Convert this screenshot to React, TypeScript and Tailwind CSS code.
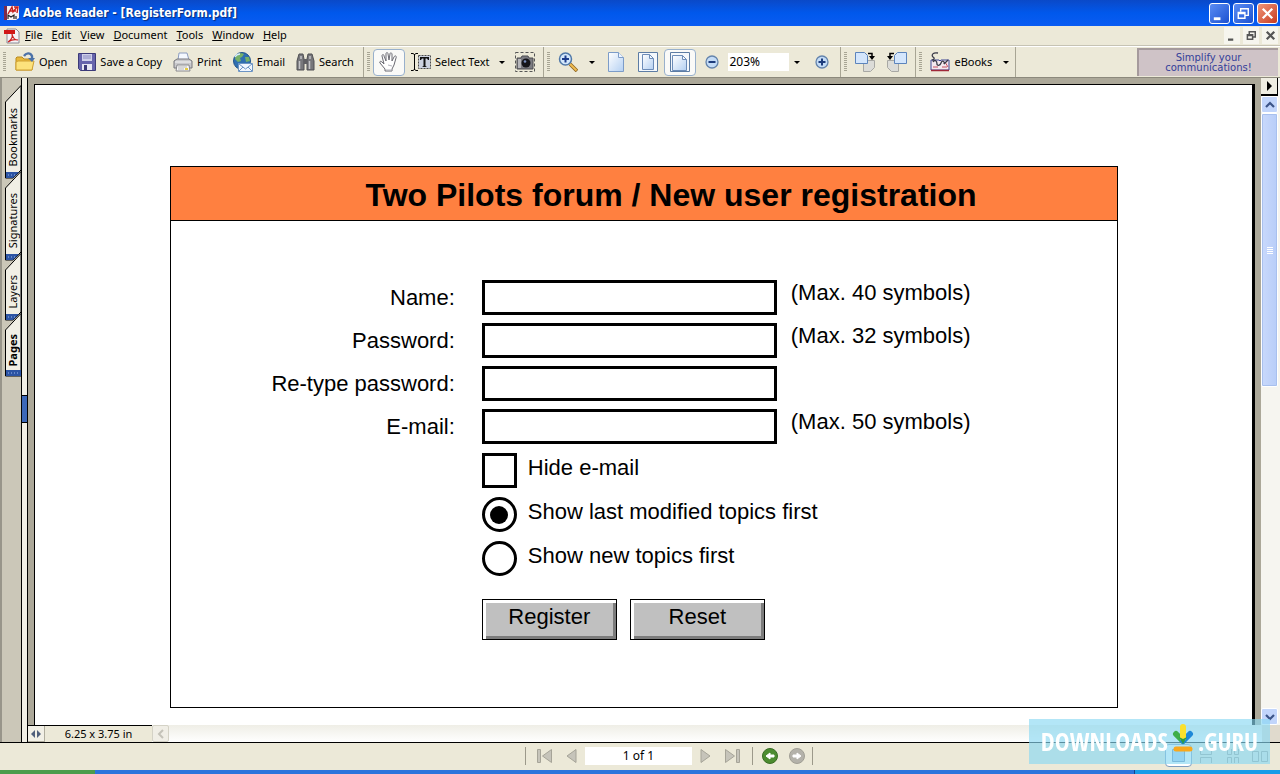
import type { ReactNode } from 'react'
import clsx from 'clsx'

const menuItems = ['File', 'Edit', 'View', 'Document', 'Tools', 'Window', 'Help']

const sideTabs = [
  { name: 'Bookmarks', height: 94 },
  { name: 'Signatures', height: 90 },
  { name: 'Layers', height: 68 },
  { name: 'Pages', height: 64, active: true },
]

const fields = [
  { id: 'name', label: 'Name:', type: 'text', hint: '(Max. 40 symbols)' },
  { id: 'password', label: 'Password:', type: 'password', hint: '(Max. 32 symbols)' },
  { id: 'retype', label: 'Re-type password:', type: 'password', hint: '' },
  { id: 'email', label: 'E-mail:', type: 'email', hint: '(Max. 50 symbols)' },
]

/* ---------- icons ---------- */

const ReaderIcon = () => (
  <svg width="16" height="16" viewBox="0 0 16 16">
    <path d="M0 1h3v14H0z" fill="#7c2a4a" />
    <path d="M3 1h12v12l-3 2H3z" fill="#f6f2f2" />
    <path d="M4 9 8 2l1 5 4-5M6 6h6M10 2h4l-1 6" fill="none" stroke="#c8201c" strokeWidth="1.4" />
    <path d="M4 14v-4l3 2 3-2v4M12 11v3" fill="none" stroke="#222" strokeWidth="1.2" />
  </svg>
)

const PdfIcon = () => (
  <svg width="16" height="16" viewBox="0 0 16 16">
    <path d="M3 1h9l3 3v11H3z" fill="#f4f4f7" stroke="#8a8a96" />
    <path d="M0 2h11v4H0z" fill="#d01818" />
    <path d="M4 14c3-2 5-5 4-8 1 5 3 6 6 6-4-1-7 0-10 2z" fill="none" stroke="#c22" strokeWidth="1.2" />
  </svg>
)

const OpenIcon = () => (
  <svg width="20" height="20" viewBox="0 0 20 20">
    <path d="M1 18V6l1-1h5l2 2h8v11z" fill="#e8b83a" stroke="#b98a1e" />
    <path d="M1 18V10l2-1h16l-2 9z" fill="#fce27c" stroke="#cfa032" />
    <path d="M9 4c2-3 6-4 8 0v3" fill="none" stroke="#4c72a8" strokeWidth="2.4" />
    <path d="m13 6 4 4 3-4z" fill="#4c72a8" />
  </svg>
)

const SaveIcon = () => (
  <svg width="18" height="18" viewBox="0 0 18 18">
    <path d="M0.5 0.5h17v17h-15l-2-2z" fill="#6664ac" stroke="#3c3a78" />
    <path d="M4 1h10v7H4z" fill="#cfd0ea" />
    <path d="M5 3h8M5 5h8" stroke="#8a8ac0" />
    <path d="M4 11h10v6H4z" fill="#e6e6f2" />
    <path d="M6 12h3v5H6z" fill="#3c3a78" />
  </svg>
)

const PrintIcon = () => (
  <svg width="20" height="20" viewBox="0 0 20 20">
    <path d="M5 8 6 1h8l2 7z" fill="#f4f8ff" stroke="#8c9cc0" />
    <path d="M1 9l3-2h12l3 2v7H1z" fill="#c9c9cc" stroke="#77777c" />
    <path d="M2 10h16" stroke="#f5f5f5" />
    <path d="M4 13h12l1 6H3z" fill="#f8f8f8" stroke="#88888c" />
    <path d="M5 15h9M5 17h6" stroke="#b5b5b5" />
    <path d="M12 16h3v2h-3z" fill="#e5cc44" />
  </svg>
)

const EmailIcon = () => (
  <svg width="20" height="20" viewBox="0 0 20 20">
    <circle cx="9" cy="9" r="8.5" fill="#2f6fb0" stroke="#22548c" />
    <path d="M3 3c3-2 6-2 8-1l-2 3-2 1 1 3-3 1-3-3zM12 5l4 0 1 4-4 1z" fill="#76b068" />
    <path d="M2 5c1-2 3-3 5-3" stroke="#d7ecfa" strokeWidth="1.3" fill="none" />
    <path d="M5.5 11.5h14v8h-14z" fill="#f0f6ff" stroke="#6c94c4" />
    <path d="m6 12 6.5 5 6.5-5M6 19l4-4M19 19l-4-4" fill="none" stroke="#6c94c4" />
  </svg>
)

const SearchIcon = () => (
  <svg width="19" height="18" viewBox="0 0 19 18">
    <path d="M3 1h4l1 5v11H1V8zM12 1h4l2 7v9h-7V6z" fill="#77777b" stroke="#505054" />
    <path d="M8 6h3v5H8z" fill="#606064" />
    <path d="M3.5 8v8M5 3v3M13.5 8v8M14 3v3" stroke="#c4c4c8" strokeWidth="1.5" />
  </svg>
)

const HandIcon = () => (
  <svg width="20" height="20" viewBox="0 0 20 20">
    <path
      d="M6 19v-2L1 11c-1-2 1-2 2-1l2 2L3 4c0-2 2-2 2 0l2 5V2c0-2 2-2 2 0l1 6 1-6c0-2 2-1 2 0v7l2-4c1-2 3-1 2 1l-2 7-2 4v2z"
      fill="#fff"
      stroke="#6a6a72"
    />
    <path d="M7 18h6M9 13l4 1" stroke="#b4b4bc" />
  </svg>
)

const SelectTextIcon = () => (
  <svg width="20" height="20" viewBox="0 0 20 20">
    <path d="M7.5 3.5h12v13h-12z" fill="#ccd2e0" stroke="#4c4c4c" strokeDasharray="2 1" />
    <path d="M0 1.5h2l1.5 1L5 1.5h2M3.5 2v16M0 18.5h2l1.5-1 1.5 1h2" fill="none" stroke="#000" />
    <path d="M9 5h9v3h-1l-1-1.5h-1.5V14l1.5 1h-5l1.5-1V6.5H11L10 8H9z" fill="#111" />
  </svg>
)

const CameraIcon = () => (
  <svg width="20" height="20" viewBox="0 0 20 20">
    <path d="M0.5 0.5h19v19h-19z" fill="none" stroke="#555" strokeDasharray="3 2" />
    <path d="M2 6h4l1-2h6l1 2h4v11H2z" fill="#7c7c82" stroke="#4c4c50" />
    <path d="M3 7h3v9H3z" fill="#b6b6ba" />
    <circle cx="11" cy="11" r="4.5" fill="#15151a" />
    <circle cx="10" cy="9.5" r="1.3" fill="#7a90c0" />
  </svg>
)

const ZoomIcon = () => (
  <svg width="20" height="20" viewBox="0 0 20 20">
    <path d="m12 12 7 7" stroke="#8c6420" strokeWidth="3.6" />
    <path d="m12 12 6.5 6.5" stroke="#f0bc50" strokeWidth="2" />
    <circle cx="7.5" cy="7" r="6" fill="#d4e8fb" stroke="#5078a8" strokeWidth="1.5" />
    <path d="M4 7h7M7.5 3.5v7" stroke="#1d3c8c" strokeWidth="2" />
  </svg>
)

const PageIcon = ({ frame }: { frame?: 'wide' | 'full' }) => (
  <svg width="20" height="20" viewBox="0 0 20 20">
    <defs>
      <linearGradient id="paper" x1="0" y1="0" x2="1" y2="1">
        <stop offset="0" stopColor="#fff" />
        <stop offset="1" stopColor="#b4d0f2" />
      </linearGradient>
    </defs>
    {frame && <path d="M0.5 0.5h19v19h-19z" fill="#f4f8fc" stroke="#5c7ca4" />}
    {!frame && <path d="M2.5 0.5h10l5 5v14h-15z" fill="url(#paper)" stroke="#7c9cc8" />}
    {!frame && <path d="M12.5 0.5v5h5" fill="#eef5ff" stroke="#7c9cc8" />}
    {frame === 'wide' && <path d="M4.5 2.5h7l4 4v11h-11zM11.5 2.5v4h4" fill="url(#paper)" stroke="#6c8cb8" />}
    {frame === 'full' && <path d="M2.5 3.5h10l4 4v11h-14zM12.5 3.5v4h4" fill="url(#paper)" stroke="#6c8cb8" />}
  </svg>
)

const RoundIcon = ({ plus }: { plus?: boolean }) => (
  <svg width="14" height="14" viewBox="0 0 14 14">
    <circle cx="7" cy="7" r="6" fill="#c4dcf6" stroke="#6484ac" strokeWidth="1.3" />
    <path d={plus ? 'M3.5 7h7M7 3.5v7' : 'M3.5 7h7'} stroke="#1d3c7c" strokeWidth="2" />
  </svg>
)

const RotateIcon = ({ left }: { left?: boolean }) => (
  <svg width="20" height="20" viewBox="0 0 20 20" className={left ? '-scale-x-100' : ''}>
    <path d="M8.5 8.5h11v7l-4 4h-7z" fill="#dcdcd8" stroke="#a8a8a4" />
    <path d="M0.5 0.5h9l3 3v8h-12z" fill="#d4e6fc" stroke="#5c84bc" />
    <path d="M13 1.5h4V5" fill="none" stroke="#000" strokeWidth="1.5" />
    <path d="M14 4h6l-3 4z" fill="#000" />
  </svg>
)

const BooksIcon = () => (
  <svg width="20" height="20" viewBox="0 0 20 20">
    <path d="M1 8h8l1 1 1-1h8v10H1z" fill="#f4e8ee" stroke="#3c4494" />
    <path d="M1 18.5h18" stroke="#a02838" strokeWidth="1.5" />
    <path d="M3 15h5M12 15h5M15 10l3 5" stroke="#c85060" />
    <path
      d="M8 1c-5-1-7 2-5 4 2 1 1 3-1 3M3 10c2-3 4-1 4 2 0 2 3 2 4-1s4-2 3 1l4-4"
      fill="none"
      stroke="#3a3a48"
      strokeWidth="1.3"
    />
  </svg>
)

const Caret = () => (
  <svg width="6" height="3" viewBox="0 0 6 3">
    <path d="M0 0h6L3 3z" fill="#000" />
  </svg>
)

const Chevron = ({ d }: { d: string }) => (
  <svg width="10" height="10" viewBox="0 0 10 10">
    <path d={d} fill="none" stroke="#3c5488" strokeWidth="2.2" />
  </svg>
)

const LayoutIcon = ({ d }: { d: string }) => (
  <svg width="16" height="16" viewBox="0 0 16 16">
    <path d={d} fill="#e4e4da" stroke="#a0a096" />
  </svg>
)

const DownloadIcon = () => (
  <svg width="22" height="28" viewBox="0 0 22 28">
    <path d="m4 10 7 7" stroke="#3fae49" strokeWidth="6" strokeLinecap="round" />
    <path d="m18 10-7 7" stroke="#1e88d8" strokeWidth="6" strokeLinecap="round" />
    <path d="M11 3v11" stroke="#fbe02c" strokeWidth="6" strokeLinecap="round" />
    <path d="m7 13 4 7 4-7-4 2z" fill="#2c9c48" />
    <path d="M4 25h14" stroke="#f8a81c" strokeWidth="5" strokeLinecap="round" />
  </svg>
)

/* ---------- window chrome ---------- */

const windowPaths = ['M4 14h7v3H4z', 'M7 8V5h8v7h-3M4.5 9h7v6h-7zM4.5 10h7', 'M5 5l10 10M15 5 5 15']
const windowNames = ['Minimize', 'Restore', 'Close']

const TitleBar = () => (
  <header className="flex h-[26px] shrink-0 items-center gap-[3px] bg-linear-to-b from-[#0a49c8] via-[#0058ec] to-[#0a5cf2] pr-[2px] pl-1">
    <ReaderIcon />
    <h1 className="flex-1 font-['DejaVu_Sans_Condensed','Noto_Sans',sans-serif] text-[12px] font-bold whitespace-nowrap text-white [text-shadow:1px_1px_1px_#0a2a78]">
      Adobe Reader - [RegisterForm.pdf]
    </h1>
    {windowPaths.map((d, i) => (
      <button
        key={d}
        aria-label={windowNames[i]}
        className={clsx(
          'flex size-[21px] items-center justify-center rounded-[3px] border border-white',
          i === 2 ? 'bg-linear-to-br from-[#ee9478] to-[#c8381c]' : 'bg-linear-to-br from-[#5a8cf4] to-[#1c50d0]'
        )}
      >
        <svg width="19" height="19" viewBox="0 0 20 20">
          <path d={d} fill={i === 0 ? '#fff' : 'none'} stroke="#fff" strokeWidth={i === 0 ? 0 : i === 2 ? 2.4 : 1.5} />
        </svg>
      </button>
    ))}
  </header>
)

const MenuBar = () => (
  <nav className="flex h-5 shrink-0 items-center gap-[9px] border-b border-[#c6c3b4] pr-[2px] pl-1">
    <div className="-mr-[4px]">
      <PdfIcon />
    </div>
    {menuItems.map((item) => (
      <button key={item}>
        <span className="underline">{item[0]}</span>
        {item.slice(1)}
      </button>
    ))}
    <div className="ml-auto flex gap-[3px]">
      {windowPaths.map((d, i) => (
        <button
          key={d}
          aria-label={`${windowNames[i]} document`}
          className="flex h-[17px] w-4 items-center justify-center bg-[#f6f5ee]"
        >
          <svg width="15" height="15" viewBox="0 0 20 20">
            <path d={d} fill={i === 0 ? '#555' : 'none'} stroke="#555" strokeWidth={i === 0 ? 0 : i === 2 ? 3 : 2} />
          </svg>
        </button>
      ))}
    </div>
  </nav>
)

const ToolGroup = ({ children, className }: { children: ReactNode; className?: string }) => (
  <div className={clsx('flex items-center border-r border-[#a8a594] pl-[3px]', className)}>
    <div className="mr-2 h-5 w-[3px] bg-[repeating-linear-gradient(to_bottom,#a8a594_0_1px,transparent_1px_2px)]" />
    {children}
  </div>
)

const Tool = ({ icon, label }: { icon: ReactNode; label: string }) => (
  <button className="flex items-center gap-1 whitespace-nowrap">
    {icon}
    {label}
  </button>
)

const pressed = 'flex h-[27px] w-8 items-center justify-center rounded-[4px] border border-[#98b0cc] bg-[#fafaf8]'

const Toolbar = () => (
  <div className="flex h-8 shrink-0 border-t border-b border-t-white border-b-[#8c897c]">
    <ToolGroup className="gap-[11px] pr-[9px] *:first:-mr-[2px]">
      <Tool icon={<OpenIcon />} label="Open" />
      <Tool icon={<SaveIcon />} label="Save a Copy" />
      <Tool icon={<PrintIcon />} label="Print" />
      <Tool icon={<EmailIcon />} label="Email" />
      <Tool icon={<SearchIcon />} label="Search" />
    </ToolGroup>
    <ToolGroup className="pr-2 *:first:mr-[3px]">
      <button aria-label="Hand tool" className={pressed}><HandIcon /></button>
      <div className="ml-[6px]"><Tool icon={<SelectTextIcon />} label="Select Text" /></div>
      <button aria-label="Select options" className="px-[10px]"><Caret /></button>
      <button aria-label="Snapshot"><CameraIcon /></button>
    </ToolGroup>
    <ToolGroup className="pr-[11px]">
      <button aria-label="Zoom in tool"><ZoomIcon /></button>
      <button aria-label="Zoom options" className="px-[11px]"><Caret /></button>
      <button aria-label="Actual size"><PageIcon /></button>
      <button aria-label="Fit page" className="mr-[6px] ml-3"><PageIcon frame="wide" /></button>
      <button aria-label="Fit width" className={pressed}><PageIcon frame="full" /></button>
      <button aria-label="Zoom out" className="mx-[9px]"><RoundIcon /></button>
      <input aria-label="Zoom level" defaultValue="203%" className="h-[18px] w-[61px] bg-white px-[1px] text-[12px]" />
      <button aria-label="Zoom levels" className="px-[5px]"><Caret /></button>
      <button aria-label="Zoom in" className="ml-[10px]"><RoundIcon plus /></button>
    </ToolGroup>
    <ToolGroup className="pr-2">
      <button aria-label="Rotate clockwise" className="mr-3"><RotateIcon /></button>
      <button aria-label="Rotate counterclockwise"><RotateIcon left /></button>
    </ToolGroup>
    <ToolGroup>
      <Tool icon={<BooksIcon />} label="eBooks" />
      <button aria-label="eBooks options" className="pr-[6px] pl-[11px]"><Caret /></button>
    </ToolGroup>
    <a
      href="#communications"
      className="mt-px mr-[2px] ml-auto flex h-7 w-[141px] items-center justify-center border-t-2 border-l-2 border-[#a59a9c] bg-[#cfc3c7] text-center font-['DejaVu_Sans',sans-serif] text-[10px] leading-[10px] text-[#33409a]"
    >
      Simplify your
      <br />
      communications!
    </a>
  </div>
)

const SideTabs = () => (
  <aside className="flex w-[22px] shrink-0 flex-col border-r border-l-2 border-r-black border-l-[#98958a] bg-[#cbc7b8] pt-[7px] pl-[3px]">
    {sideTabs.map(({ name, height, active }) => (
      <button
        key={name}
        className="relative -mb-2 flex w-4 items-center justify-center pt-[10px]"
        style={{ height }}
      >
        <svg className="absolute inset-0" width="16" height={height}>
          <path d={`M16 0.5 0.5 17V${height - 1}H${active ? 16 : 8}L16 ${height - 9}z`} fill="#f1efe5" stroke="#000" />
          <path d={`M1 ${height - 7}h${active ? 15 : 13}l${active ? 0 : -6} 6H1z`} fill="#2c54a4" />
          <path d={`M3 ${height - 4}h12`} stroke="#9cb8ec" strokeDasharray="1 2" />
        </svg>
        <span className={clsx('relative rotate-180 text-[11px] leading-4 [writing-mode:vertical-rl]', active && 'font-bold')}>
          {name}
        </span>
      </button>
    ))}
  </aside>
)

const Splitter = () => (
  <div className="flex w-[6px] shrink-0 flex-col border-r border-black bg-[#f1efe5] pt-[317px]">
    <div className="h-[28px] border-y border-black bg-[#3c68b8]" />
  </div>
)

const scrollButton = 'flex items-center justify-center rounded-[2px] border border-white bg-[#c2d5fb]'

const VerticalScroll = () => (
  <div className="flex w-[19px] shrink-0 flex-col bg-[#f6f5f0] pr-[2px]">
    <button aria-label="Open panel" className="flex h-[18px] items-center justify-center border-r border-b-2 border-black bg-[#efede2]">
      <svg width="5" height="10" viewBox="0 0 5 10"><path d="M0 0l5 5-5 5z" /></svg>
    </button>
    <button aria-label="Scroll up" className={clsx(scrollButton, 'h-[17px]')}><Chevron d="m1 7 4-4 4 4" /></button>
    <div className="flex h-[274px] flex-col items-center justify-center gap-px rounded-[2px] border border-white bg-linear-to-r from-[#c9d9fc] to-[#b8cdf8] outline-1 -outline-offset-2 outline-[#a8c0ee]">
      {[0, 1, 2, 3].map((i) => (
        <div key={i} className="h-px w-[6px] bg-white" />
      ))}
    </div>
    <button aria-label="Scroll down" className={clsx(scrollButton, 'mt-auto h-[17px]')}><Chevron d="m1 3 4 4 4-4" /></button>
  </div>
)

const HorizontalScroll = () => (
  <div className="flex h-[17px] shrink-0 bg-linear-to-b from-[#efeee6] to-white">
    <div className="flex w-[124px] items-center border-t border-black bg-[#ece9d8]">
      <button aria-label="Resize page info" className="flex h-full w-[17px] items-center justify-center border-r border-b border-[#b0ad9e] bg-[#f2f0e6]">
        <svg width="10" height="8" viewBox="0 0 10 8"><path d="M4 0v8L0 4zM6 0v8l4-4z" fill="#50607c" /></svg>
      </button>
      <span className="flex-1 text-center whitespace-nowrap">6.25 x 3.75 in</span>
    </div>
    <button aria-label="Scroll left" className="flex w-[17px] items-center justify-center rounded-[2px] border border-[#d4d2c6] bg-[#f0eee6]">
      <svg width="8" height="10" viewBox="0 0 8 10"><path d="M6 1 2 5l4 4" fill="none" stroke="#c4c2b8" strokeWidth="2" /></svg>
    </button>
    <div className="ml-auto w-[18px] bg-[#e0dacd]" />
  </div>
)

/* ---------- the document ---------- */

const option = 'm-0 grid size-[35px] shrink-0 appearance-none place-content-center border-[3px] border-black bg-white'
const radio = clsx(option, "rounded-full checked:before:block checked:before:size-[18px] checked:before:rounded-full checked:before:bg-black checked:before:content-['']")
const optionLabel = 'flex h-[35px] items-start gap-[11px] leading-[30px]'
const pushButton =
  'h-[41px] w-[135px] border border-black bg-[#c0c0c0] pb-[6px] shadow-[inset_3px_3px_0_#fff,inset_-3px_-3px_0_#7c7c7c]'

const RegisterForm = () => (
  <form
    className="mt-[81px] mr-[134px] ml-[135px] border border-black bg-white pb-[67px] font-['Liberation_Sans',Arial,sans-serif] text-[22px] text-black"
    onSubmit={(e) => e.preventDefault()}
  >
    <h2 className="flex h-[54px] items-center justify-center border-b border-black bg-[#ff8040] pt-[3px] pl-[54px] text-[32px] font-bold">
      Two Pilots forum / New user registration
    </h2>
    <div className="mt-[59px] flex flex-col gap-2">
      {fields.map(({ id, label, type, hint }) => (
        <div key={id} className="grid h-[35px] grid-cols-[30%_295px_1fr]">
          <label htmlFor={id} className="text-right leading-[35px]">{label}</label>
          <input id={id} type={type} className="ml-[27px] h-[35px] w-[295px] border-[3px] border-black bg-white px-2" />
          <span className="pl-[41px] leading-[26px]">{hint}</span>
        </div>
      ))}
    </div>
    <div className="mt-[9px] ml-[30%] flex flex-col gap-[9px] pl-[27px]">
      <label className={optionLabel}>
        <input type="checkbox" className={option} />
        Hide e-mail
      </label>
      <label className={optionLabel}>
        <input type="radio" name="order" defaultChecked className={radio} />
        Show last modified topics first
      </label>
      <label className={optionLabel}>
        <input type="radio" name="order" className={radio} />
        Show new topics first
      </label>
      <div className="mt-[14px] flex gap-[13px]">
        <button type="submit" className={pushButton}>Register</button>
        <button type="reset" className={pushButton}>Reset</button>
      </div>
    </div>
  </form>
)

/* ---------- bottom ---------- */

const NavArrow = ({ name, d, w }: { name: string; d: string; w: number }) => (
  <button aria-label={name}>
    <svg width={w} height="16" viewBox={`0 0 ${w} 16`}>
      <path d={d} fill="#c6c4ba" stroke="#a6a498" />
    </svg>
  </button>
)

const HistoryButton = ({ name, back }: { name: string; back?: boolean }) => (
  <button aria-label={name}>
    <svg width="16" height="16" viewBox="0 0 16 16">
      <circle cx="8" cy="8" r="7.5" fill={back ? '#4c8c30' : '#b4b2aa'} stroke={back ? '#386c24' : '#a09e94'} />
      <path d={back ? 'M4 8l4-3v2h4v2H8v2z' : 'M12 8 8 5v2H4v2h4v2z'} fill="#fff" stroke="#fff" />
    </svg>
  </button>
)

const Divider = () => <div className="h-[18px] w-px bg-[#9c998a]" />

const StatusBar = () => (
  <footer className="flex h-[28px] shrink-0 items-center border-t border-black bg-[#ece9d8] pb-[2px]">
    <div className="flex flex-1 items-center justify-end">
      <Divider />
      <div className="flex items-center pr-[11px] pl-[10px]">
        <NavArrow name="First page" w={17} d="M1.5 1.5h3v13h-3zM15.5 1.5v13L6.5 8z" />
        <div className="mr-2 ml-[13px] flex"><NavArrow name="Previous page" w={11} d="M10 1.5v13L1 8z" /></div>
        <input aria-label="Page" defaultValue="1 of 1" className="h-[18px] w-[107px] bg-white text-center text-[12px]" />
        <div className="mr-[13px] ml-2 flex"><NavArrow name="Next page" w={11} d="M1 1.5v13L10 8z" /></div>
        <NavArrow name="Last page" w={17} d="M12.5 1.5h3v13h-3zM1.5 1.5v13l9-6.5z" />
      </div>
      <Divider />
      <div className="flex gap-[11px] pr-[7px] pl-[9px]">
        <HistoryButton name="Previous view" back />
        <HistoryButton name="Next view" />
      </div>
      <Divider />
    </div>
    <div className="flex w-[467px] items-center justify-end gap-[11px] pr-3">
      <button aria-label="Single page" className="-mr-[5px] flex h-[23px] w-[27px] items-center justify-center rounded-[4px] border border-[#7c9cc0] bg-white">
        <svg width="13" height="13" viewBox="0 0 13 13"><path d="M0.5 0.5h12v12h-12z" fill="#a8ccf0" stroke="#5c84b4" /></svg>
      </button>
      <button aria-label="Continuous"><LayoutIcon d="M2.5 1v5.5h11V1M2.5 15V9.5h11V15" /></button>
      <button aria-label="Continuous facing"><LayoutIcon d="M2.5 1v5.5h4V1M9.5 1v5.5h4V1M2.5 15V9.5h4V15M9.5 15V9.5h4V15" /></button>
      <button aria-label="Facing"><LayoutIcon d="M0.5 3.5h6v10h-6zM9.5 3.5h6v10h-6z" /></button>
    </div>
  </footer>
)

const Watermark = () => (
  <div className="pointer-events-none fixed right-[10px] bottom-[10px] flex h-[45px] w-[241px] items-center justify-center bg-[#8ad8f2]/65 font-['Open_Sans_Condensed','Noto_Sans_Condensed','Roboto_Condensed',Roboto,sans-serif] text-[25px] font-bold text-white">
    DOWNLOADS
    <div className="mx-1 mb-2"><DownloadIcon /></div>
    .GURU
  </div>
)

export default function App() {
  return (
    <div className="flex h-screen flex-col overflow-hidden bg-[#ece9d8] font-['Noto_Sans',Tahoma,sans-serif] text-[11px] text-black">
      <TitleBar />
      <MenuBar />
      <Toolbar />
      <div className="flex min-h-0 flex-1">
        <SideTabs />
        <Splitter />
        <div className="flex min-w-0 flex-1 flex-col">
          <div className="flex min-h-0 flex-1">
            <main className="min-w-0 flex-1 overflow-hidden bg-[#aca899] pt-[6px] pr-[6px] pl-[6px]">
              <div className="h-full border-t border-r-[3px] border-l border-black bg-white">
                <div className="flow-root">
                  <RegisterForm />
                </div>
              </div>
            </main>
            <VerticalScroll />
          </div>
          <HorizontalScroll />
        </div>
      </div>
      <StatusBar />
      <div className="flex h-1 shrink-0">
        <div className="w-[95px] bg-[#4c9c4c]" />
        <div className="flex-1 bg-[#2c74dc]" />
        <div className="w-[146px] border-l border-[#14408c] bg-[#189ce8]" />
      </div>
      <Watermark />
    </div>
  )
}
